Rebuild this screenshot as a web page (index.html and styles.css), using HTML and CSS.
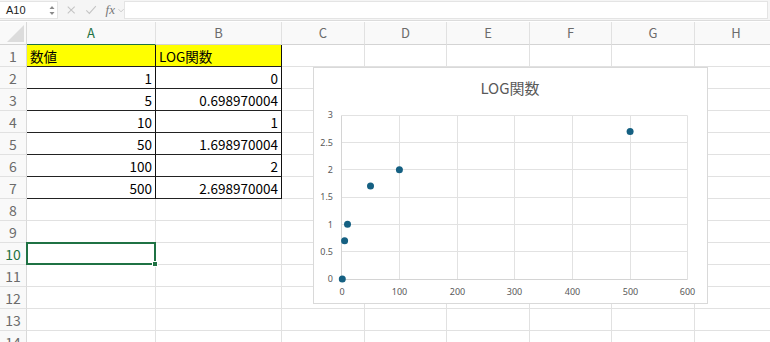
FILE: index.html
```html
<!DOCTYPE html>
<html>
<head>
  <title>LOG関数</title>
  <link rel="stylesheet" href="styles.css">
</head>
<body>
  <div class="formula-bar">
    <div class="name-box">
      <span class="name">A10</span>
      <svg class="spin" width="6" height="11" viewBox="0 0 6 11">
        <path d="M0.5 4 L3 1 L5.5 4 Z" fill="#8a8a8a"/>
        <path d="M0.5 7 L3 10 L5.5 7 Z" fill="#8a8a8a"/>
      </svg>
    </div>
    <div class="tools">
      <svg class="tool" width="12" height="12" viewBox="0 0 12 12">
        <path d="M2 2 L10 10 M10 2 L2 10" stroke="#c4c4c4" stroke-width="1.2" fill="none"/>
      </svg>
      <svg class="tool" width="14" height="12" viewBox="0 0 14 12">
        <path d="M1.5 6.5 L5 10 L12.5 1.5" stroke="#c4c4c4" stroke-width="1.2" fill="none"/>
      </svg>
      <span class="fx">fx</span>
      <svg class="caret" width="7" height="5" viewBox="0 0 7 5">
        <path d="M0.5 1 L3.5 4 L6.5 1" stroke="#c4c4c4" stroke-width="1" fill="none"/>
      </svg>
    </div>
    <div class="formula-input"></div>
  </div>

  <div class="sheet">
    <div class="row head">
      <div class="rh corner"></div>
      <div class="ch ca on">A</div>
      <div class="ch cb">B</div>
      <div class="ch cw">C</div>
      <div class="ch cn">D</div>
      <div class="ch cw">E</div>
      <div class="ch cn">F</div>
      <div class="ch cw">G</div>
      <div class="ch cw">H</div>
    </div>

    <div class="row">
      <div class="rh">1</div>
      <div class="cell ca t yellow">数値</div>
      <div class="cell cb t yellow">LOG関数</div>
      <div class="cell cw"></div><div class="cell cn"></div><div class="cell cw"></div><div class="cell cn"></div><div class="cell cw"></div><div class="cell cw"></div>
    </div>
    <div class="row">
      <div class="rh">2</div>
      <div class="cell ca t num">1</div>
      <div class="cell cb t num">0</div>
      <div class="cell cw"></div><div class="cell cn"></div><div class="cell cw"></div><div class="cell cn"></div><div class="cell cw"></div><div class="cell cw"></div>
    </div>
    <div class="row">
      <div class="rh">3</div>
      <div class="cell ca t num">5</div>
      <div class="cell cb t num">0.698970004</div>
      <div class="cell cw"></div><div class="cell cn"></div><div class="cell cw"></div><div class="cell cn"></div><div class="cell cw"></div><div class="cell cw"></div>
    </div>
    <div class="row">
      <div class="rh">4</div>
      <div class="cell ca t num">10</div>
      <div class="cell cb t num">1</div>
      <div class="cell cw"></div><div class="cell cn"></div><div class="cell cw"></div><div class="cell cn"></div><div class="cell cw"></div><div class="cell cw"></div>
    </div>
    <div class="row">
      <div class="rh">5</div>
      <div class="cell ca t num">50</div>
      <div class="cell cb t num">1.698970004</div>
      <div class="cell cw"></div><div class="cell cn"></div><div class="cell cw"></div><div class="cell cn"></div><div class="cell cw"></div><div class="cell cw"></div>
    </div>
    <div class="row">
      <div class="rh">6</div>
      <div class="cell ca t num">100</div>
      <div class="cell cb t num">2</div>
      <div class="cell cw"></div><div class="cell cn"></div><div class="cell cw"></div><div class="cell cn"></div><div class="cell cw"></div><div class="cell cw"></div>
    </div>
    <div class="row">
      <div class="rh">7</div>
      <div class="cell ca t num">500</div>
      <div class="cell cb t num">2.698970004</div>
      <div class="cell cw"></div><div class="cell cn"></div><div class="cell cw"></div><div class="cell cn"></div><div class="cell cw"></div><div class="cell cw"></div>
    </div>
    <div class="row">
      <div class="rh">8</div>
      <div class="cell ca"></div><div class="cell cb"></div>
      <div class="cell cw"></div><div class="cell cn"></div><div class="cell cw"></div><div class="cell cn"></div><div class="cell cw"></div><div class="cell cw"></div>
    </div>
    <div class="row">
      <div class="rh">9</div>
      <div class="cell ca"></div><div class="cell cb"></div>
      <div class="cell cw"></div><div class="cell cn"></div><div class="cell cw"></div><div class="cell cn"></div><div class="cell cw"></div><div class="cell cw"></div>
    </div>
    <div class="row">
      <div class="rh on">10</div>
      <div class="cell ca selected"></div><div class="cell cb"></div>
      <div class="cell cw"></div><div class="cell cn"></div><div class="cell cw"></div><div class="cell cn"></div><div class="cell cw"></div><div class="cell cw"></div>
    </div>
    <div class="row">
      <div class="rh">11</div>
      <div class="cell ca"></div><div class="cell cb"></div>
      <div class="cell cw"></div><div class="cell cn"></div><div class="cell cw"></div><div class="cell cn"></div><div class="cell cw"></div><div class="cell cw"></div>
    </div>
    <div class="row">
      <div class="rh">12</div>
      <div class="cell ca"></div><div class="cell cb"></div>
      <div class="cell cw"></div><div class="cell cn"></div><div class="cell cw"></div><div class="cell cn"></div><div class="cell cw"></div><div class="cell cw"></div>
    </div>
    <div class="row">
      <div class="rh">13</div>
      <div class="cell ca"></div><div class="cell cb"></div>
      <div class="cell cw"></div><div class="cell cn"></div><div class="cell cw"></div><div class="cell cn"></div><div class="cell cw"></div><div class="cell cw"></div>
    </div>
    <div class="row">
      <div class="rh">14</div>
      <div class="cell ca"></div><div class="cell cb"></div>
      <div class="cell cw"></div><div class="cell cn"></div><div class="cell cw"></div><div class="cell cn"></div><div class="cell cw"></div><div class="cell cw"></div>
    </div>

    <!-- scatter chart floating over the sheet -->
    <div class="chart">
      <svg width="393" height="235" viewBox="0 0 393 235">
        <text class="chart-title" x="196" y="26" text-anchor="middle">LOG関数</text>
        <g stroke="#e2e2e2" stroke-width="1">
          <line x1="27.5" y1="47.5" x2="373.5" y2="47.5"/>
          <line x1="27.5" y1="74.5" x2="373.5" y2="74.5"/>
          <line x1="27.5" y1="101.5" x2="373.5" y2="101.5"/>
          <line x1="27.5" y1="129.5" x2="373.5" y2="129.5"/>
          <line x1="27.5" y1="156.5" x2="373.5" y2="156.5"/>
          <line x1="27.5" y1="183.5" x2="373.5" y2="183.5"/>
          <line x1="85.5" y1="47.5" x2="85.5" y2="211.5"/>
          <line x1="143.5" y1="47.5" x2="143.5" y2="211.5"/>
          <line x1="200.5" y1="47.5" x2="200.5" y2="211.5"/>
          <line x1="258.5" y1="47.5" x2="258.5" y2="211.5"/>
          <line x1="316.5" y1="47.5" x2="316.5" y2="211.5"/>
          <line x1="373.5" y1="47.5" x2="373.5" y2="211.5"/>
        </g>
        <g stroke="#d4d4d4" stroke-width="1">
          <line x1="27.5" y1="211.5" x2="373.5" y2="211.5"/>
          <line x1="27.5" y1="47.5" x2="27.5" y2="211.5"/>
        </g>
        <g class="axis" text-anchor="end">
          <text x="19" y="50">3</text>
          <text x="19" y="77.5">2.5</text>
          <text x="19" y="105">2</text>
          <text x="19" y="132">1.5</text>
          <text x="19" y="159.5">1</text>
          <text x="19" y="187">0.5</text>
          <text x="19" y="214">0</text>
        </g>
        <g class="axis" text-anchor="middle">
          <text x="28" y="227">0</text>
          <text x="85.5" y="227">100</text>
          <text x="143.5" y="227">200</text>
          <text x="200.5" y="227">300</text>
          <text x="258.5" y="227">400</text>
          <text x="316.5" y="227">500</text>
          <text x="373.5" y="227">600</text>
        </g>
        <g fill="#156082">
          <circle cx="28.3" cy="211" r="3.5"/>
          <circle cx="30.6" cy="172.8" r="3.5"/>
          <circle cx="33.5" cy="156.3" r="3.5"/>
          <circle cx="56.5" cy="118.1" r="3.5"/>
          <circle cx="85.4" cy="101.7" r="3.5"/>
          <circle cx="316.1" cy="63.4" r="3.5"/>
        </g>
      </svg>
    </div>
  </div>
</body>
</html>
```

FILE: styles.css
```css
body {
  margin: 0;
  width: 770px;
  height: 342px;
  overflow: hidden;
  background: #fff;
  font-family: "Noto Sans CJK JP", "Noto Sans", sans-serif;
  color: #000;
}

/* formula bar */
.formula-bar {
  display: flex;
  align-items: center;
  height: 20px;
  padding: 0 2px 0 0;
  background: #f5f5f5;
  border-bottom: 1px solid #dcdcdc;
  margin-bottom: 1px;
}

.name-box {
  display: flex;
  align-items: center;
  justify-content: space-between;
  width: 58px;
  height: 18px;
  box-sizing: border-box;
  padding: 0 2px 0 6px;
  background: #fff;
  border: 1px solid #e4e4e4;
  border-left: none;
}

.name {
  font-family: "Liberation Sans", sans-serif;
  font-size: 11px;
  color: #222;
}

.tools {
  display: flex;
  align-items: center;
  width: 66px;
  padding-left: 8px;
  box-sizing: border-box;
}

.tool {
  margin-right: 9px;
}

.fx {
  font-family: "Liberation Serif", serif;
  font-style: italic;
  font-size: 13px;
  color: #777;
  margin-left: -1px;
}

.caret {
  margin-left: 3px;
}

.formula-input {
  flex: 1;
  height: 18px;
  background: #fff;
  border: 1px solid #e4e4e4;
  box-sizing: border-box;
}

/* sheet grid */
.sheet {
  position: relative;
}

.row {
  display: flex;
  height: 22px;
}

.row.head {
  height: 23px;
}

.rh,
.ch,
.cell {
  flex: none;
  box-sizing: border-box;
  border-right: 1px solid #e1e1e1;
  border-bottom: 1px solid #e1e1e1;
}

.rh {
  width: 27px;
  background: #f9f9f9;
  border-right-color: #d9d9d9;
  text-align: center;
  font-size: 14px;
  line-height: 22px;
  color: #6b6b6b;
}

.ch {
  background: #f9f9f9;
  border-bottom-color: #d4d4d4;
  text-align: center;
  font-size: 13px;
  line-height: 22px;
  color: #6b6b6b;
}

.corner {
  position: relative;
  border-bottom-color: #d4d4d4;
}

.corner::after {
  content: "";
  position: absolute;
  right: 2px;
  bottom: 2px;
  border-left: 17px solid transparent;
  border-bottom: 17px solid #dcdcdc;
}

.on {
  color: #1f7244;
}

.ch.on {
  border-bottom: 1px solid #1f7244;
}

.ca { width: 129px; }
.cb { width: 126px; }
.cw { width: 83px; }
.cn { width: 82px; }

.cell {
  font-size: 13.5px;
  line-height: 22px;
  padding: 0 3px;
  white-space: nowrap;
  overflow: hidden;
}

.cell.t {
  border-right-color: #111;
  border-bottom-color: #222;
}

.yellow {
  background: #ffff00;
}

.num {
  text-align: right;
}

.selected {
  position: relative;
  overflow: visible;
}

.selected::before {
  content: "";
  position: absolute;
  left: -1px;
  top: -1px;
  right: -1px;
  bottom: -1px;
  border: 2px solid #1f7244;
}

.selected::after {
  content: "";
  position: absolute;
  right: -3px;
  bottom: -3px;
  width: 4px;
  height: 4px;
  background: #1f7244;
  border: 1px solid #fff;
}

/* chart */
.chart {
  position: absolute;
  left: 313px;
  top: 45px;
  width: 395px;
  height: 237px;
  box-sizing: border-box;
  background: #fff;
  border: 1px solid #d9d9d9;
}

.chart svg {
  display: block;
}

.chart-title {
  font-family: "Noto Sans CJK JP", sans-serif;
  font-size: 15px;
  fill: #595959;
}

.axis {
  font-family: "Noto Sans", sans-serif;
  font-size: 9px;
  fill: #595959;
}
```
